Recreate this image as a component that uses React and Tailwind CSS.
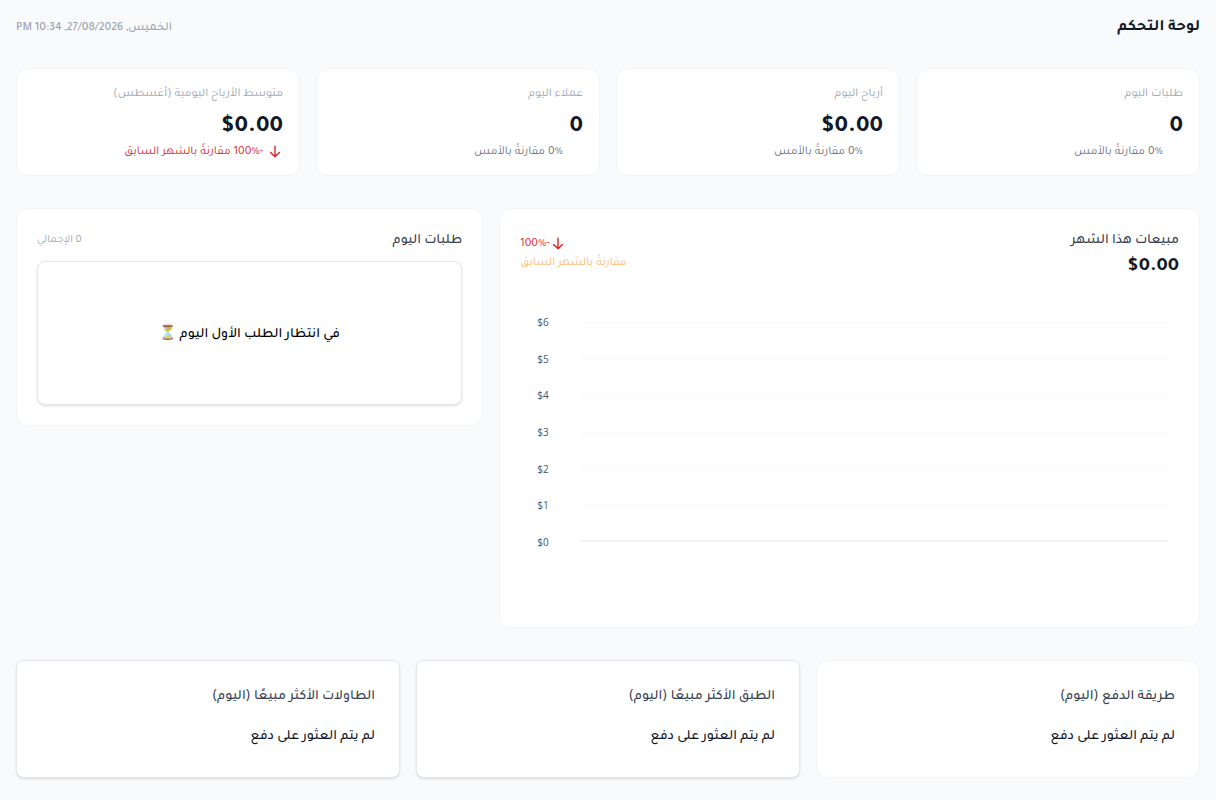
import React from "react";

const stats = [
  { label: "طلبات اليوم", value: "0", change: "0% مقارنةً بالأمس", down: false },
  { label: "أرباح اليوم", value: "$0.00", change: "0% مقارنةً بالأمس", down: false },
  { label: "عملاء اليوم", value: "0", change: "0% مقارنةً بالأمس", down: false },
  { label: "متوسط الأرباح اليومية (أغسطس)", value: "$0.00", change: "-100% مقارنةً بالشهر السابق", down: true },
];

const ticks = [6, 5, 4, 3, 2, 1, 0];

function ArrowDown() {
  return (
    <svg className="size-4 shrink-0" viewBox="0 0 16 16" fill="currentColor" aria-hidden="true">
      <path
        fillRule="evenodd"
        d="M8 1.5a.7.7 0 0 1 .7.7v8.9l3.2-3.2a.7.7 0 0 1 1 1l-4.4 4.4a.7.7 0 0 1-1 0L3.1 8.9a.7.7 0 0 1 1-1l3.2 3.2V2.2A.7.7 0 0 1 8 1.5z"
      />
    </svg>
  );
}

function StatCard({ label, value, change, down }) {
  return (
    <article className="rounded-xl border border-gray-100 bg-white px-4 pt-[17px] pb-[15px]">
      <h2 className="text-xs leading-4 text-[#9ca3af]">{label}</h2>
      <p className="mt-2.5 text-2xl leading-8 font-bold text-[#111827]">
        <bdi dir="ltr">{value}</bdi>
      </p>
      <p className={down ? "flex items-center gap-1 text-xs leading-4 text-[#dc2626]" : "flex items-center gap-1 text-xs leading-4 text-[#6b7280]"}>
        {down ? <ArrowDown /> : <span className="size-4" />}
        <span>{change}</span>
      </p>
    </article>
  );
}

function SalesChart() {
  return (
    <div dir="ltr" className="mt-[33px] mb-[57px] flex h-[236px] gap-8 pr-[11px] pl-[17px]">
      <div className="flex flex-col justify-between font-['Open_Sans',sans-serif] text-[10px] leading-4 text-[#4b5563]">
        {ticks.map((t) => (
          <span key={t}>${t}</span>
        ))}
      </div>
      <svg className="my-2 h-[220px] min-w-0 flex-1" role="img" aria-label="مبيعات هذا الشهر">
        {ticks.map((t, i) => (
          <line
            key={t}
            x1="0"
            x2="100%"
            y1={t === 0 ? 219 : Math.round(i * 36.5) + 0.5}
            y2={t === 0 ? 219 : Math.round(i * 36.5) + 0.5}
            stroke={t === 0 ? "#f4f4f5" : "#f3f4f6"}
            strokeWidth={t === 0 ? 2 : 1}
            strokeDasharray={t === 0 ? "none" : "1 1"}
          />
        ))}
      </svg>
    </div>
  );
}

function EmptyCard({ title, raised }) {
  return (
    <section
      className={
        raised
          ? "rounded-lg border border-gray-200 bg-white px-6 pt-[26px] pb-[30px] shadow-sm"
          : "rounded-xl border border-gray-100 bg-white px-6 pt-[26px] pb-[30px]"
      }
    >
      <h2 className="text-sm leading-5 font-medium text-[#374151]">{title}</h2>
      <p className="mt-5 text-sm leading-5 font-medium text-[#111827]">لم يتم العثور على دفع</p>
    </section>
  );
}

export default function App() {
  return (
    <main dir="rtl" className="min-h-screen bg-[#f9fafb] p-4 font-[Tajawal,'Noto_Sans',sans-serif]">
      <header className="flex h-6 items-center justify-between">
        <h1 className="text-base leading-5 font-bold text-[#111827]">لوحة التحكم</h1>
        <time className="text-xs leading-4 font-medium text-[#9ca3af]">الخميس, 27/08/2026, 10:34 PM</time>
      </header>

      <div className="mt-7 grid grid-cols-4 gap-4">
        {stats.map((s) => (
          <StatCard key={s.label} {...s} />
        ))}
      </div>

      <div className="mt-8 grid grid-cols-[3fr_2fr] items-start gap-4">
        <section className="rounded-xl border border-gray-100 bg-white px-5 pt-[22px] pb-5">
          <div className="flex items-start justify-between">
            <div>
              <h2 className="text-sm leading-5 font-medium text-[#374151]">مبيعات هذا الشهر</h2>
              <p className="mt-0.5 text-xl leading-7 font-bold text-[#111827]">
                <bdi dir="ltr">$0.00</bdi>
              </p>
            </div>
            <div className="flex flex-col items-end gap-px pt-[5px]">
              <p className="flex items-center text-xs leading-4 text-[#dc2626]">
                <ArrowDown />
                <span>-100%</span>
              </p>
              <p className="text-xs leading-5 text-[#fdba74]">مقارنةً بالشهر السابق</p>
            </div>
          </div>
          <SalesChart />
        </section>

        <section className="rounded-xl border border-gray-100 bg-white px-5 pt-[22px] pb-5">
          <div className="flex items-center justify-between">
            <h2 className="text-sm leading-5 font-medium text-[#374151]">طلبات اليوم</h2>
            <span className="text-[11px] leading-4 text-[#9ca3af]">0 الإجمالي</span>
          </div>
          <div className="mt-2.5 flex h-36 items-center justify-center rounded-lg border border-gray-200 bg-white pt-1 shadow-sm">
            <p className="text-sm leading-5 font-medium text-black">في انتظار الطلب الأول اليوم ⏳</p>
          </div>
        </section>
      </div>

      <div className="mt-8 grid grid-cols-3 gap-4">
        <EmptyCard title="طريقة الدفع (اليوم)" />
        <EmptyCard title="الطبق الأكثر مبيعًا (اليوم)" raised />
        <EmptyCard title="الطاولات الأكثر مبيعًا (اليوم)" raised />
      </div>
    </main>
  );
}
